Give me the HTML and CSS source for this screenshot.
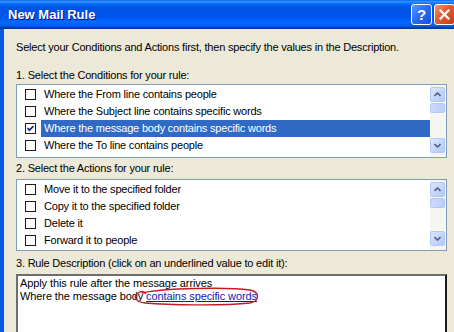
FILE: index.html
```html
<!DOCTYPE html>
<html lang="en">
<head>
    <meta charset="UTF-8">
    <title>New Mail Rule</title>
    <link rel="stylesheet" href="styles.css">
</head>
<body>
    <div class="window">
        <div class="titlebar">
            <span class="title">New Mail Rule</span>
            <div class="tb-buttons">
                <span class="tb-btn help">?</span>
                <span class="tb-btn close">
                    <svg width="11" height="11" viewBox="0 0 11 11"><path d="M1.5 1.5 L9.5 9.5 M9.5 1.5 L1.5 9.5" stroke="#fff" stroke-width="2.2" stroke-linecap="square"/></svg>
                </span>
            </div>
        </div>
        <div class="content">
            <p class="intro">Select your Conditions and Actions first, then specify the values in the Description.</p>

            <div class="section-label first">1. Select the Conditions for your rule:</div>
            <div class="listbox conditions">
                <ul class="items">
                    <li><span class="check"></span><span class="item-text">Where the From line contains people</span></li>
                    <li><span class="check"></span><span class="item-text">Where the Subject line contains specific words</span></li>
                    <li class="selected"><span class="check checked">
                        <svg width="9" height="9" viewBox="0 0 9 9"><path d="M1.5 4 L3.5 6.2 L7.5 2" fill="none" stroke="#1d2f6b" stroke-width="1.8"/></svg>
                    </span><span class="item-text">Where the message body contains specific words</span></li>
                    <li><span class="check"></span><span class="item-text">Where the To line contains people</span></li>
                </ul>
                <div class="scrollbar">
                    <span class="sb-btn"><svg width="7" height="5" viewBox="0 0 7 5"><path d="M0.5 4 L3.5 1 L6.5 4" fill="none" stroke="#4d6185" stroke-width="1.6"/></svg></span>
                    <span class="sb-thumb"></span>
                    <span class="sb-track"></span>
                    <span class="sb-btn"><svg width="7" height="5" viewBox="0 0 7 5"><path d="M0.5 1 L3.5 4 L6.5 1" fill="none" stroke="#4d6185" stroke-width="1.6"/></svg></span>
                </div>
            </div>

            <div class="section-label second">2. Select the Actions for your rule:</div>
            <div class="listbox actions">
                <ul class="items">
                    <li><span class="check"></span><span class="item-text">Move it to the specified folder</span></li>
                    <li><span class="check"></span><span class="item-text">Copy it to the specified folder</span></li>
                    <li><span class="check"></span><span class="item-text">Delete it</span></li>
                    <li><span class="check"></span><span class="item-text">Forward it to people</span></li>
                </ul>
                <div class="scrollbar">
                    <span class="sb-btn"><svg width="7" height="5" viewBox="0 0 7 5"><path d="M0.5 4 L3.5 1 L6.5 4" fill="none" stroke="#4d6185" stroke-width="1.6"/></svg></span>
                    <span class="sb-thumb"></span>
                    <span class="sb-track"></span>
                    <span class="sb-btn"><svg width="7" height="5" viewBox="0 0 7 5"><path d="M0.5 1 L3.5 4 L6.5 1" fill="none" stroke="#4d6185" stroke-width="1.6"/></svg></span>
                </div>
            </div>

            <div class="section-label third">3. Rule Description (click on an underlined value to edit it):</div>
            <div class="description">
                <div>Apply this rule after the message arrives</div>
                <div>Where the message body <a href="#" class="value-link">contains specific words</a></div>
                <svg class="circle-mark" width="127" height="19" viewBox="0 0 127 19">
                    <path d="M9 6 C 30 1, 95 0, 117 3 C 127 5, 127 14, 117 16 C 90 19, 35 18, 12 16 C 2 15, 0 9, 5 6 C 8 4, 11 4, 13 7" fill="none" stroke="#c41a24" stroke-width="1.3"/>
                </svg>
            </div>
        </div>
    </div>
</body>
</html>
```

FILE: styles.css
```css
body {
    margin: 0;
    overflow: hidden;
    font-family: "Liberation Sans", Arial, sans-serif;
    font-size: 11px;
    letter-spacing: -0.2px;
    color: #000;
    background-color: #ece9d8;
}
.window {
    width: 462px;
    height: 332px;
    overflow: hidden;
    background-color: #ece9d8;
}
.titlebar {
    height: 29px;
    display: flex;
    align-items: center;
    padding: 0 7px 0 8px;
    background: linear-gradient(to bottom, #0058ee 0%, #3593ff 4%, #288eff 7%, #127dff 10%, #036ffc 14%, #0262ee 18%, #0057e5 24%, #0054e3 30%, #0055eb 56%, #005bf5 66%, #026afe 76%, #0062ef 86%, #0052d6 92%, #0040ab 96%, #003092 100%);
}
.title {
    flex: 1;
    color: #fff;
    font-weight: bold;
    font-size: 13px;
    letter-spacing: 0;
    text-shadow: 1px 1px 0 #0f1089;
}
.tb-buttons {
    display: flex;
    gap: 2px;
}
.tb-btn {
    width: 21px;
    height: 21px;
    box-sizing: border-box;
    border: 1px solid #fff;
    border-radius: 3px;
    display: flex;
    align-items: center;
    justify-content: center;
    color: #fff;
    font-weight: bold;
    font-size: 15px;
    letter-spacing: 0;
}
.help {
    background: linear-gradient(135deg, #5c97ff 0%, #2a6ef5 45%, #1550dc 100%);
}
.close {
    background: linear-gradient(135deg, #f0936c 0%, #e35a30 45%, #c93c18 100%);
}
.content {
    height: 303px;
    box-sizing: border-box;
    border-left: 4px solid #0757e9;
    padding: 11px 15px 0 12px;
}
.intro {
    margin: 0 0 14px;
    line-height: 14px;
}
.section-label {
    line-height: 14px;
}
.section-label.first {
    margin-bottom: 2px;
}
.section-label.second {
    margin-top: 3px;
    margin-bottom: 4px;
}
.section-label.third {
    margin-top: 5px;
    margin-bottom: 4px;
}
.listbox {
    display: flex;
    box-sizing: border-box;
    border: 1px solid #7f9db9;
    background-color: #fff;
}
.conditions {
    height: 74px;
}
.actions {
    height: 72px;
}
.items {
    flex: 1;
    list-style: none;
    margin: 0;
    padding: 1px 0 0;
}
.items li {
    display: flex;
    align-items: center;
    height: 17px;
}
.check {
    width: 11px;
    height: 11px;
    box-sizing: border-box;
    margin: 0 5px 0 8px;
    border: 1px solid #1c1c1c;
    background-color: #fff;
    display: flex;
    align-items: center;
    justify-content: center;
}
.item-text {
    flex: 1;
    padding-left: 3px;
    line-height: 17px;
    white-space: nowrap;
}
.selected .item-text {
    background-color: #316ac5;
    color: #fff;
}
.scrollbar {
    width: 16px;
    display: flex;
    flex-direction: column;
    padding: 2px 1px 4px 0;
    box-sizing: border-box;
    background-color: #f6f6f1;
}
.sb-btn {
    height: 15px;
    box-sizing: border-box;
    border: 1px solid #b4c8f3;
    border-radius: 2px;
    background: linear-gradient(135deg, #dce7fe 0%, #c3d4fc 60%, #b3c7f4 100%);
    display: flex;
    align-items: center;
    justify-content: center;
}
.sb-thumb {
    height: 10px;
    margin-top: 1px;
    box-sizing: border-box;
    border: 1px solid #b4c8f3;
    border-radius: 2px;
    background: linear-gradient(to right, #cbd9fd, #bccefa);
}
.sb-track {
    flex: 1;
}
.description {
    position: relative;
    height: 62px;
    box-sizing: border-box;
    border: 2px solid;
    border-color: #6e6e6e #1a1a1a #1a1a1a #6e6e6e;
    padding: 1px 2px;
    background-color: #fff;
    line-height: 13px;
    letter-spacing: -0.1px;
}
.value-link {
    color: #1414c0;
    text-decoration: underline;
}
.circle-mark {
    position: absolute;
    left: 115px;
    top: 11px;
}
```
